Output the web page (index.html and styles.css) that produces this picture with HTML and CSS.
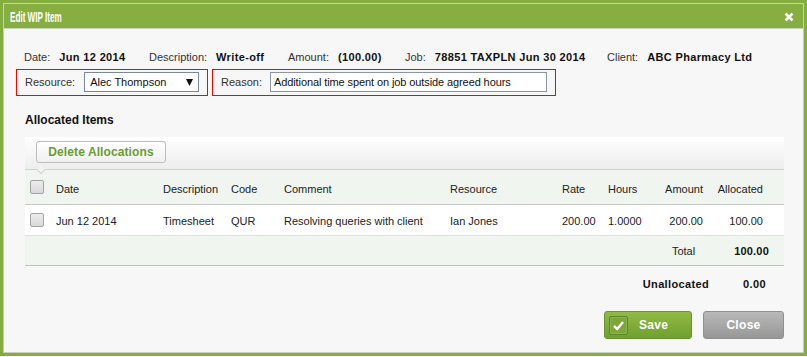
FILE: index.html
```html
<!DOCTYPE html>
<html>
<head>
<meta charset="utf-8">
<title>Edit WIP Item</title>
<link rel="stylesheet" href="styles.css">
</head>
<body>
<div class="dialog">
  <div class="frame">
    <div class="titlebar">
      <span class="title">Edit WIP Item</span>
      <svg class="close-x" width="10" height="10" viewBox="0 0 10 10"><path d="M1.5 1.5 L8.5 8.5 M8.5 1.5 L1.5 8.5" stroke="#fff" stroke-width="2.6" fill="none"/></svg>
    </div>
    <div class="content">
      <div class="info">
        <div class="pair"><span class="lbl">Date:</span><b>Jun 12 2014</b></div>
        <div class="pair"><span class="lbl">Description:</span><b>Write-off</b></div>
        <div class="pair"><span class="lbl">Amount:</span><b>(100.00)</b></div>
        <div class="pair"><span class="lbl">Job:</span><b>78851 TAXPLN Jun 30 2014</b></div>
        <div class="pair"><span class="lbl">Client:</span><b>ABC Pharmacy Ltd</b></div>
      </div>
      <div class="fields">
        <div class="field field-resource">
          <span class="flabel">Resource:</span>
          <div class="select"><span>Alec Thompson</span><svg class="arrow" width="7" height="7" viewBox="0 0 7 7"><polygon points="0,0 7,0 3.5,7" fill="#111"/></svg></div>
        </div>
        <div class="field field-reason">
          <span class="flabel">Reason:</span>
          <div class="input">Additional time spent on job outside agreed hours</div>
        </div>
      </div>
      <div class="section-title">Allocated Items</div>
      <div class="grid-panel">
        <div class="toolbar">
          <button class="btn-delete">Delete Allocations</button>
          <span class="notch"></span>
        </div>
        <div class="row head">
          <span class="cb"></span>
          <span>Date</span>
          <span>Description</span>
          <span>Code</span>
          <span>Comment</span>
          <span>Resource</span>
          <span>Rate</span>
          <span>Hours</span>
          <span class="r">Amount</span>
          <span class="r">Allocated</span>
          <span></span>
        </div>
        <div class="row data">
          <span class="cb"></span>
          <span>Jun 12 2014</span>
          <span>Timesheet</span>
          <span>QUR</span>
          <span>Resolving queries with client</span>
          <span>Ian Jones</span>
          <span>200.00</span>
          <span>1.0000</span>
          <span class="r">200.00</span>
          <span class="r">100.00</span>
          <span></span>
        </div>
        <div class="total-row"><span class="tl">Total</span><b class="tv">100.00</b></div>
      </div>
      <div class="unalloc"><b class="ul">Unallocated</b><b class="uv">0.00</b></div>
      <div class="actions">
        <button class="btn btn-save"><span class="chk"><svg width="13" height="13" viewBox="0 0 13 13"><path d="M2 6.8 L5.2 10 L11 3" stroke="#fff" stroke-width="2.4" fill="none"/></svg></span><span class="btxt">Save</span></button>
        <button class="btn btn-close">Close</button>
      </div>
    </div>
  </div>
</div>
</body>
</html>
```
FILE: styles.css
```css
* { box-sizing: border-box; }
html, body { margin: 0; padding: 0; background: #fff; }
body { font-family: "Liberation Sans", Arial, sans-serif; font-size: 11px; color: #222; }

.dialog {
  width: 807px;
  height: 356px;
  border: 3px solid #84ad40;
  box-shadow: 0 1px 0 #b8b8b8;
}
.frame {
  height: 100%;
  border: 1px solid #c9cfc0;
  background: #f7f7f7;
  display: flex;
  flex-direction: column;
}
.titlebar {
  height: 25px;
  background: #86ae41;
  border-bottom: 1px solid #cdd5c2;
  display: flex;
  align-items: center;
  justify-content: space-between;
  padding: 0 9px 0 6px;
}
.title {
  display: inline-block;
  color: #fff;
  font-weight: bold;
  font-size: 14px;
  transform: scaleX(0.58);
  transform-origin: left center;
  margin-top: 1px;
  white-space: nowrap;
}
.close-x { display: block; margin-top: 1px; }

.content { padding: 0 19px 0 12px; flex: 1; display: flex; flex-direction: column; }

.info {
  display: grid;
  grid-template-columns: 125px 139px 117px 202px auto;
  padding: 21px 0 0 8px;
  line-height: 14px;
  color: #333;
}
.pair { display: flex; gap: 9px; white-space: nowrap; }
.pair b { color: #111; letter-spacing: 0.35px; }

.fields { display: flex; gap: 4px; margin-top: 5px; }
.field {
  display: flex;
  align-items: center;
  border: 1px solid #ff0000;
  padding: 2px 8px 3px 8px;
  gap: 9px;
  color: #333;
}
.field-resource { width: 192px; }
.field-reason { width: 344px; gap: 8px; }
.select {
  width: 117px;
  height: 20px;
  border: 1px solid #7b8896;
  background: #fff;
  display: flex;
  align-items: center;
  justify-content: space-between;
  padding: 0 5px 0 5px;
  color: #111;
}
.arrow { display: block; }
.input {
  width: 277px;
  height: 20px;
  border: 1px solid #8b96a2;
  background: #fff;
  padding: 0 3px;
  line-height: 18px;
  color: #111;
  white-space: nowrap;
  letter-spacing: -0.1px;
}

.section-title {
  margin: 17px 0 0 9px;
  font-size: 12px;
  font-weight: bold;
  line-height: 14px;
  color: #111;
}

.grid-panel { margin: 10px 0 0 9px; }
.toolbar {
  position: relative;
  height: 33px;
  padding: 4px 11px 0;
  background: linear-gradient(#ffffff, #ededed);
  border-bottom: 1px solid #cfd3cf;
}
.btn-delete {
  width: 130px;
  height: 22px;
  border: 1px solid #bdbdbd;
  border-radius: 3px;
  background: linear-gradient(#ffffff, #f0f0f0);
  color: #6c9c30;
  font-family: "Liberation Sans", Arial, sans-serif;
  font-weight: bold;
  font-size: 12px;
  padding: 0;
  letter-spacing: 0.1px;
}
.notch {
  position: absolute;
  left: 13px;
  bottom: -4px;
  width: 6px;
  height: 6px;
  transform: rotate(45deg);
  background: #f1f5f0;
  border-right: 1px solid #cfd3cf;
  border-bottom: 1px solid #cfd3cf;
}

.row {
  display: grid;
  grid-template-columns: 31px 107px 68px 53px 166px 112px 46px 42px 53px 60px 20px;
  align-items: center;
  white-space: nowrap;
  color: #222;
}
.row .r { text-align: right; }
.row.head { height: 35px; padding-top: 4px; background: #f1f5f0; border-bottom: 1px solid #c6cac6; }
.row.data { height: 31px; padding-top: 2px; background: #fff; border-bottom: 1px solid #dfe3df; }
.cb {
  width: 14px;
  height: 14px;
  margin-left: 5px;
  border: 1px solid #a4a4a4;
  border-radius: 2px;
  background: linear-gradient(#ececec, #d9d9d9);
}
.row.head .cb { margin-top: -4px; }
.row.data .cb { margin-top: -3px; }

.total-row {
  height: 30px;
  background: #f1f5f0;
  border-bottom: 1px solid #bfc3bf;
  display: flex;
  align-items: center;
  justify-content: flex-end;
  padding-right: 15px;
  gap: 39px;
}
.tl { color: #222; }
.tv { color: #111; letter-spacing: 0.2px; }

.unalloc {
  display: flex;
  justify-content: flex-end;
  gap: 34px;
  margin-top: 11px;
  padding-right: 18px;
  line-height: 14px;
  color: #111;
}
.ul { letter-spacing: 0.35px; }
.uv { letter-spacing: 0.4px; }

.actions { display: flex; justify-content: flex-end; gap: 11px; margin-top: 20px; }
.btn {
  height: 28px;
  border-radius: 3px;
  color: #fff;
  font-family: "Liberation Sans", Arial, sans-serif;
  font-weight: bold;
  font-size: 12px;
  letter-spacing: 0.3px;
  padding: 0;
}
.btn-save {
  width: 88px;
  border: 1px solid #6b9433;
  background: linear-gradient(#8fba46, #71a02e);
  display: flex;
  align-items: center;
  padding-left: 4px;
}
.chk {
  width: 19px;
  height: 19px;
  border: 1px solid #5d8727;
  border-radius: 2px;
  background: #7aa737;
  box-shadow: inset 0 0 0 1px rgba(255,255,255,0.15);
  display: flex;
  align-items: center;
  justify-content: center;
}
.chk svg { display: block; }
.btxt { margin-left: 11px; }
.btn-close {
  width: 81px;
  border: 1px solid #8f8f8f;
  background: linear-gradient(#b9b9b9, #979797);
}
```
